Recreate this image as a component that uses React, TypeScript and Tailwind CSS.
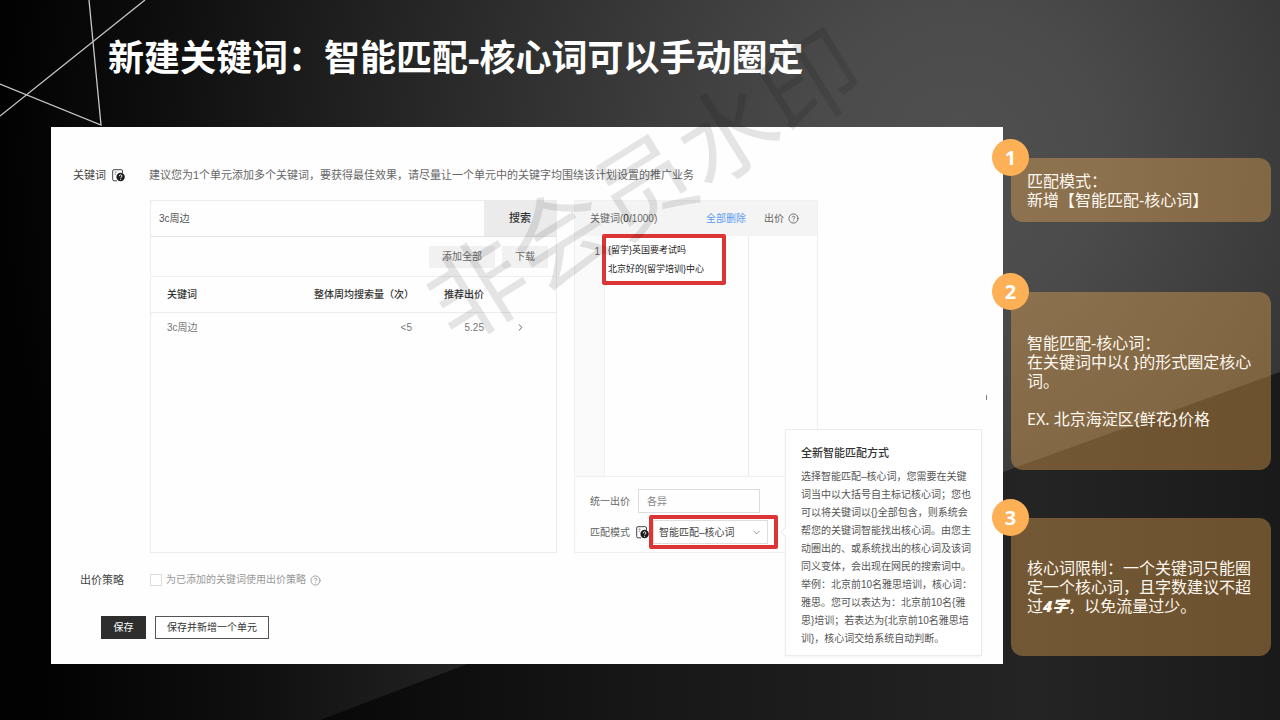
import type { ReactNode } from 'react'
import { ChevronDown, ChevronRight, CircleHelp } from 'lucide-react'

const KEYWORD_ROWS = [{ word: '3c周边', volume: '<5', price: '5.25' }]

const TIP_LINES = [
  '选择智能匹配–核心词，您需要在关键',
  '词当中以大括号自主标记核心词；您也',
  '可以将关键词以{}全部包含，则系统会',
  '帮您的关键词智能找出核心词。由您主',
  '动圈出的、或系统找出的核心词及该词',
  '同义变体，会出现在网民的搜索词中。',
  '举例：北京前10名雅思培训，核心词：',
  '雅思。您可以表达为：北京前10名{雅',
  '思}培训；若表达为{北京前10名雅思培',
  '训}，核心词交给系统自动判断。',
]

/**
 * スライド背景（グラデーションと左上の線）
 */
function Backdrop() {
  return (
    <svg
      className="absolute inset-0 h-full w-full"
      viewBox="0 0 1280 720"
      preserveAspectRatio="none"
      aria-hidden="true"
    >
      <defs>
        <radialGradient id="glow" gradientUnits="userSpaceOnUse" cx="0" cy="0" r="1" gradientTransform="translate(960 160) scale(960 1000)">
          <stop offset="0" stopColor="#505050" />
          <stop offset="0.15" stopColor="#4b4b4b" />
          <stop offset="0.35" stopColor="#3a3a3a" />
          <stop offset="0.6" stopColor="#242424" />
          <stop offset="0.85" stopColor="#0d0d0d" />
          <stop offset="1" stopColor="#020202" />
        </radialGradient>
        <linearGradient id="floor" gradientUnits="userSpaceOnUse" x1="300" y1="0" x2="1280" y2="0">
          <stop offset="0" stopColor="#070707" />
          <stop offset="0.35" stopColor="#171717" />
          <stop offset="0.75" stopColor="#242424" />
          <stop offset="1" stopColor="#1a1a1a" />
        </linearGradient>
        <linearGradient id="beam" gradientUnits="userSpaceOnUse" x1="40" y1="0" x2="480" y2="0">
          <stop offset="0" stopColor="#020202" />
          <stop offset="0.5" stopColor="#101010" />
          <stop offset="1" stopColor="#242424" />
        </linearGradient>
      </defs>
      <rect width="1280" height="720" fill="url(#glow)" />
      <path d="M0 640H520V720H0Z" fill="url(#beam)" />
      <path d="M1280 372L1003 472L475 661L320 720H1280Z" fill="url(#floor)" />
      <g fill="none" stroke="#c8c8c8" strokeWidth="1.3">
        <path d="M89 0L101 125L0 84" />
        <path d="M145 0L0 116" />
      </g>
    </svg>
  )
}

function DocHelpIcon() {
  return (
    <svg width="13" height="13" viewBox="0 0 13 13" className="shrink-0" aria-hidden="true">
      <path d="M10.500 4V2a1.300 1.300 0 0 0-1.300-1.300H2A1.300 1.300 0 0 0 .700 2v8.500a1.300 1.300 0 0 0 1.300 1.300H5" fill="none" stroke="#444" />
      <path d="M2.800 3.200h1.700M2.800 5.200h1" stroke="#666" />
      <circle cx="8.600" cy="8" r="4.200" fill="#1c1c1c" />
      <path d="M7.300 7.200a1.300 1.300 0 1 1 1.800 1.100c-.4.200-.5.400-.5.800M8.600 9.900v.9" fill="none" stroke="#fff" />
    </svg>
  )
}

function SearchPanel() {
  return (
    <section className="flex h-[353px] w-[407px] shrink-0 flex-col border border-[#ececec] text-[10px] text-[#666]">
      <form className="flex h-9 border-b border-[#e2e2e2]">
        <input
          aria-label="搜索关键词"
          defaultValue="3c周边"
          className="min-w-0 flex-1 px-2 text-[#555] outline-none"
        />
        <button type="button" className="w-[72px] bg-[#ebebeb] text-[11px] font-medium text-[#333]">
          搜索
        </button>
      </form>
      <div className="flex h-10 items-center justify-end gap-[7px] border-b border-[#f0f0f0] pr-2">
        <button type="button" className="h-[22px] w-[66px] bg-[#f1f1f1]">添加全部</button>
        <button type="button" className="h-[22px] w-[46px] bg-[#f1f1f1]">下载</button>
      </div>
      <table className="w-full table-fixed">
        <thead>
          <tr className="h-[35px] border-b border-[#ececec] text-[#333]">
            <th className="pl-4 text-left font-medium">关键词</th>
            <th className="w-[130px] text-right font-medium">整体周均搜索量（次）</th>
            <th className="w-[70px] text-right font-medium">推荐出价</th>
            <th className="w-[72px]"></th>
          </tr>
        </thead>
        <tbody>
          {KEYWORD_ROWS.map((row) => (
            <tr key={row.word} className="h-[30px] text-[#777]">
              <td className="pl-4">{row.word}</td>
              <td className="pr-[2px] text-right">{row.volume}</td>
              <td className="text-right">{row.price}</td>
              <td className="pl-[31px]">
                <ChevronRight size={11} className="text-[#555]" />
              </td>
            </tr>
          ))}
        </tbody>
      </table>
    </section>
  )
}

function KeywordPanel() {
  return (
    <section className="relative flex h-[353px] w-[244px] shrink-0 flex-col border border-[#f0f0f0] text-[10px] text-[#666]">
      <header className="flex h-[35px] items-center bg-[#f4f4f4] pl-[15px]">
        <span>
          关键词(<b className="font-medium text-[#222]">0</b>/1000)
        </span>
        <a href="#clear" className="ml-auto text-[#5b9cf0]">全部删除</a>
        <span className="mr-[18px] ml-[18px] flex items-center gap-1">
          出价
          <CircleHelp size={11} />
        </span>
      </header>
      <div className="flex h-[241px] border-b border-[#f0f0f0]">
        <div className="w-[30px] border-r border-[#f0f0f0] bg-[#fafafa] pt-2 pr-1 text-right">1</div>
        <div className="w-[144px] border-r border-[#ececec]" />
      </div>
      <textarea
        aria-label="关键词列表"
        readOnly
        rows={2}
        value={'{留学}英国要考试吗\n北京好的{留学培训}中心'}
        className="absolute top-[33px] left-[27px] h-[51px] w-[124px] resize-none overflow-hidden rounded-xs border-4 border-[#dc3535] bg-white pt-[3px] pl-[2px] text-[9px] leading-[19px] whitespace-pre text-[#222] outline-none"
      />
      <div className="flex flex-col gap-[2px] pt-3 pl-[15px]">
        <label className="flex items-center">
          <span className="w-12">统一出价</span>
          <input placeholder="各异" className="h-6 w-[122px] border border-[#ddd] px-2 placeholder:text-[#888]" />
        </label>
        <div className="flex items-center">
          <label htmlFor="match" className="w-[46px]">匹配模式</label>
          <DocHelpIcon />
          <div className="relative rounded-xs border-4 border-[#dc3535] py-px pr-[6px]">
            <select
              id="match"
              defaultValue="core"
              className="h-6 w-[115px] appearance-none border border-[#ddd] bg-white px-[5px] text-[#444] outline-none"
            >
              <option value="core">智能匹配–核心词</option>
            </select>
            <ChevronDown size={11} className="pointer-events-none absolute top-2 right-3 text-[#888]" />
          </div>
        </div>
      </div>
    </section>
  )
}

function MatchTip() {
  return (
    <div
      role="tooltip"
      className="absolute right-[21px] bottom-2 w-[197px] border border-[#ececec] bg-white pt-[13px] pr-1 pb-[7px] pl-[15px] text-[10px] leading-[18px] whitespace-nowrap text-[#555] shadow-xs"
    >
      <span className="absolute top-[98px] -left-1 size-2 rotate-45 border-b border-l border-[#ececec] bg-white" />
      <h2 className="pb-[5px] text-[11px] leading-5 font-medium text-[#333]">全新智能匹配方式</h2>
      {TIP_LINES.map((line) => (
        <p key={line}>{line}</p>
      ))}
    </div>
  )
}

function NoteCard({ no, className, children }: { no: number; className: string; children: ReactNode }) {
  return (
    <li className={`relative rounded-xl bg-[#ffb357]/36 px-4 text-[16px] leading-[19px] text-[#fff8ef] ${className}`}>
      <span className="absolute -top-[19px] -left-[19px] flex size-[37px] items-center justify-center rounded-full bg-[#fdb055] text-[20px] font-bold text-white">
        {no}
      </span>
      {children}
    </li>
  )
}

export default function App() {
  return (
    <div className="relative min-h-screen overflow-hidden bg-black font-['Noto_Sans','Noto_Sans_CJK_SC',sans-serif]">
      <Backdrop />
      <div className="relative flex min-h-screen flex-col">
        <h1 className="pt-8 pb-[43px] pl-[108px] text-[36px] leading-[52px] font-bold text-white">
          新建关键词：智能匹配-核心词可以手动圈定
        </h1>
        <div className="flex items-start pr-[9px] pl-[51px]">
          <main className="relative min-w-0 flex-1 bg-[#fefefe] pt-[39px] pb-[25px] font-['Liberation_Sans','Noto_Sans_CJK_SC',sans-serif]">
            <div className="flex items-center pl-[22px] text-[11px] leading-[18px] text-[#555]">
              <span className="mr-[6px] text-[#444]">关键词</span>
              <DocHelpIcon />
              <p className="ml-6 text-[#666]">
                建议您为1个单元添加多个关键词，要获得最佳效果，请尽量让一个单元中的关键字均围绕该计划设置的推广业务
              </p>
            </div>
            <div className="mt-4 flex gap-[17px] pl-[99px]">
              <SearchPanel />
              <KeywordPanel />
            </div>
            <div className="mt-[18px] flex items-center pl-[29px] text-[11px] leading-[18px] text-[#444]">
              <span className="w-[70px]">出价策略</span>
              <label className="flex items-center gap-1 text-[10px] text-[#999]">
                <input type="checkbox" className="size-3 appearance-none border border-[#ddd] bg-white" />
                为已添加的关键词使用出价策略
                <CircleHelp size={11} />
              </label>
            </div>
            <div className="mt-[27px] flex gap-[9px] pl-[50px] text-[10px]">
              <button type="button" className="h-[23px] w-[45px] bg-[#2e2e2e] text-white">保存</button>
              <button type="button" className="h-[23px] w-[114px] border border-[#555] bg-white text-[#333]">
                保存并新增一个单元
              </button>
            </div>
            <span className="absolute top-[268px] right-4 h-[5px] w-px rounded-full bg-[#777]" />
            <MatchTip />
          </main>
          <aside className="ml-2 w-[260px] shrink-0 pt-[31px]">
            <ol>
              <NoteCard no={1} className="pt-[14px] pb-3">
                <p>匹配模式：</p>
                <p>新增【智能匹配-核心词】</p>
              </NoteCard>
              <NoteCard no={2} className="mt-[70px] pt-[42px] pb-[41px]">
                <p>智能匹配-核心词：</p>
                <p>在关键词中以{'{ }'}的形式圈定核心词。</p>
                <p className="mt-[19px]">EX. 北京海淀区{'{鲜花}'}价格</p>
              </NoteCard>
              <NoteCard no={3} className="mt-12 pt-[41px] pb-10">
                <p>
                  核心词限制：一个关键词只能圈定一个核心词，且字数建议不超过
                  <em className="font-black">4字</em>，以免流量过少。
                </p>
              </NoteCard>
            </ol>
          </aside>
        </div>
      </div>
      <div className="pointer-events-none absolute top-[184px] left-[643px] -translate-x-1/2 -translate-y-1/2 -rotate-32 text-[98px] leading-none whitespace-nowrap text-black/10">
        非会员水印
      </div>
    </div>
  )
}
